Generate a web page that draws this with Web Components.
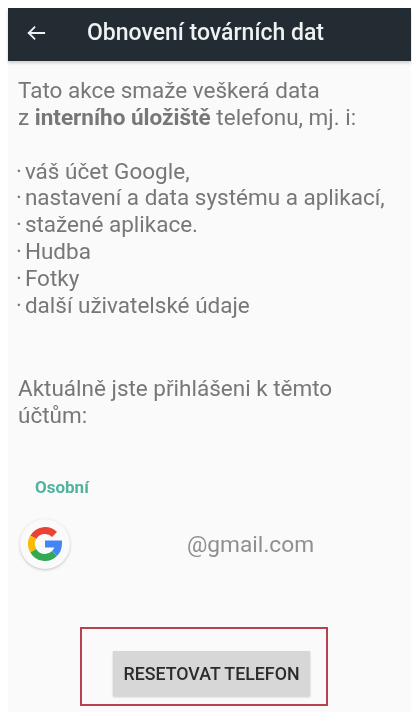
<!DOCTYPE html>
<html><head><meta charset="utf-8"><style>
html,body{margin:0;padding:0;background:#fff}
body{width:412px;height:712px;overflow:hidden;font-family:Roboto,"Noto Sans",sans-serif}
.d{margin-right:3px}
</style></head><body>
<reset-screen>
<app-bar slot="bar" title="Obnovení továrních dat"></app-bar>
<info-text slot="intro">Tato akce smaže veškerá data<br>z <b>interního úložiště</b> telefonu, mj. i:</info-text>
<info-text slot="list"><span class="d">·</span>váš účet Google,<br><span class="d">·</span>nastavení a data systému a aplikací,<br><span class="d">·</span>stažené aplikace.<br><span class="d">·</span>Hudba<br><span class="d">·</span>Fotky<br><span class="d">·</span>další uživatelské údaje</info-text>
<info-text slot="accounts">Aktuálně jste přihlášeni k těmto<br>účtům:</info-text>
<account-row slot="account" label="Osobní" email="@gmail.com"></account-row>
<reset-action slot="action">RESETOVAT TELEFON</reset-action>
</reset-screen>
<script>
function def(name,html,init){customElements.define(name,class extends HTMLElement{connectedCallback(){if(this.shadowRoot)return;const r=this.attachShadow({mode:'open'});r.innerHTML=html;if(init)init(this,r);}});}
def('reset-screen',`<style>
:host{display:flex;flex-direction:column;box-sizing:border-box;width:403px;height:704px;margin:8px 0 0 8px;background:#fafafa;filter:blur(.45px)}
.intro{padding:16px 10px 0 10px}
.list{padding:27px 0 0 8px}
.acc{padding:57px 10px 0 10px}
.account{padding:49px 0 0 0}
.action{margin-top:auto}
</style>
<slot name="bar"></slot>
<div class="intro"><slot name="intro"></slot></div>
<div class="list"><slot name="list"></slot></div>
<div class="acc"><slot name="accounts"></slot></div>
<div class="account"><slot name="account"></slot></div>
<div class="action"><slot name="action"></slot></div>`);
def('app-bar',`<style>
:host{display:flex;align-items:center;height:53px;padding-bottom:4px;background:#232b33;color:#eef2f2;box-sizing:border-box;box-shadow:0 2px 3px rgba(0,0,0,.18);position:relative}
svg{margin-left:18px;width:20px;height:20px;flex:none}
span{margin-left:41px;font:500 23px/1 Roboto,sans-serif}
</style>
<svg viewBox="0 0 22 22" fill="none" stroke="#eef2f2" stroke-width="2"><path d="M21 11H2M10 4l-7 7 7 7"/></svg><span id="t"></span>`,(h,r)=>{r.getElementById('t').textContent=h.getAttribute('title')});
def('info-text',`<style>
:host{display:block;font:400 22.500px/26.8px Roboto,sans-serif;color:#777;white-space:nowrap}
</style><slot></slot>`);
def('account-row',`<style>
:host{display:block}
.label{font:700 17px/18px Roboto,sans-serif;color:#4fb3a0;padding-left:27px}
.row{display:flex;align-items:center;margin-top:23px;padding-left:12px}
.g{width:50px;height:50px;border-radius:50%;background:#fafafa;box-shadow:0 1px 3px rgba(0,0,0,.22);display:flex;align-items:center;justify-content:center;flex:none}
.mail{margin-left:117px;font:400 22.700px/1 Roboto,sans-serif;color:#8f8f8f;position:relative;top:1px}
svg{width:34px;height:34px}
</style>
<div class="label" id="l"></div>
<div class="row"><div class="g"><svg viewBox="0 0 32 32" fill="none" stroke-width="6.500">
<path stroke="#EA4335" d="M24.980 7.020A12.700 12.700 0 0 0 5 9.650"/>
<path stroke="#FBBC05" d="M5 9.650A12.700 12.700 0 0 0 5 22.350"/>
<path stroke="#34A853" d="M5 22.350A12.700 12.700 0 0 0 24.980 24.980"/>
<path stroke="#4285F4" d="M24.980 24.980A12.700 12.700 0 0 0 28.700 16H16"/>
</svg></div><span class="mail" id="m"></span></div>`,(h,r)=>{r.getElementById('l').textContent=h.getAttribute('label');r.getElementById('m').textContent=h.getAttribute('email')});
def('reset-action',`<style>
:host{display:block;padding:0 0 6px 72px}
.box{box-sizing:border-box;width:248px;height:79px;border:2px solid #b8404f;padding:22px 0 0 31px}
.btn{box-sizing:border-box;width:197px;height:45px;background:#d6d7d6;box-shadow:0 1px 2px rgba(0,0,0,.2);display:flex;align-items:center;justify-content:center;font:500 17.800px/1 Roboto,sans-serif;color:#2b2b2b;white-space:nowrap}
</style><div class="box"><div class="btn"><slot></slot></div></div>`);
</script>
</body></html>
